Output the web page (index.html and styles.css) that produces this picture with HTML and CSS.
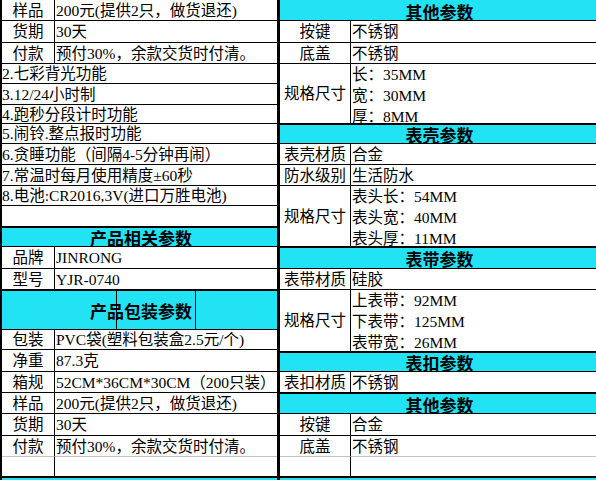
FILE: index.html
```html
<!DOCTYPE html>
<html lang="zh-CN">
<head>
<meta charset="utf-8">
<title>产品参数</title>
<link rel="stylesheet" href="styles.css">
</head>
<body>
<div class="sheet">
  <div class="left">
    <div class="k">样品</div><div class="v">200元(提供2只，做货退还)</div>
    <div class="k">货期</div><div class="v">30天</div>
    <div class="k">付款</div><div class="v">预付30%，余款交货时付清。</div>
    <div class="full">2.七彩背光功能</div>
    <div class="full">3.12/24小时制</div>
    <div class="full">4.跑秒分段计时功能</div>
    <div class="full">5.闹铃.整点报时功能</div>
    <div class="full">6.贪睡功能（间隔4-5分钟再闹）</div>
    <div class="full">7.常温时每月使用精度±60秒</div>
    <div class="full">8.电池:CR2016,3V(进口万胜电池)</div>
    <div class="full"></div>
    <div class="hd">产品相关参数</div>
    <div class="k">品牌</div><div class="v">JINRONG</div>
    <div class="k">型号</div><div class="v">YJR-0740</div>
    <div class="hd pack">产品包装参数</div>
    <div class="k">包装</div><div class="v">PVC袋(塑料包装盒2.5元/个)</div>
    <div class="k">净重</div><div class="v">87.3克</div>
    <div class="k">箱规</div><div class="v">52CM*36CM*30CM（200只装）</div>
    <div class="k">样品</div><div class="v">200元(提供2只，做货退还)</div>
    <div class="k">货期</div><div class="v">30天</div>
    <div class="k soft">付款</div><div class="v soft">预付30%，余款交货时付清。</div>
    <div class="k last"></div><div class="v last"></div>
    <div class="hd tail"></div>
  </div>
  <div class="right">
    <div class="hd first">其他参数</div>
    <div class="k">按键</div><div class="v">不锈钢</div>
    <div class="k">底盖</div><div class="v">不锈钢</div>
    <div class="k">规格尺寸</div>
    <div class="v multi"><div class="sub">长：35MM</div><div class="sub">宽：30MM</div><div class="sub">厚：8MM</div></div>
    <div class="hd">表壳参数</div>
    <div class="k">表壳材质</div><div class="v">合金</div>
    <div class="k">防水级别</div><div class="v">生活防水</div>
    <div class="k">规格尺寸</div>
    <div class="v multi"><div class="sub">表头长：54MM</div><div class="sub">表头宽：40MM</div><div class="sub">表头厚：11MM</div></div>
    <div class="hd">表带参数</div>
    <div class="k">表带材质</div><div class="v">硅胶</div>
    <div class="k">规格尺寸</div>
    <div class="v multi"><div class="sub">上表带：92MM</div><div class="sub">下表带：125MM</div><div class="sub">表带宽：26MM</div></div>
    <div class="hd">表扣参数</div>
    <div class="k">表扣材质</div><div class="v">不锈钢</div>
    <div class="hd">其他参数</div>
    <div class="k">按键</div><div class="v">合金</div>
    <div class="k soft">底盖</div><div class="v soft">不锈钢</div>
    <div class="k last"></div><div class="v last"></div>
    <div class="hd tail"></div>
  </div>
</div>
</body>
</html>
```

FILE: styles.css
```css
html, body {
  margin: 0;
  padding: 0;
  background: #ffffff;
  overflow: hidden;
}

.sheet {
  display: flex;
  width: 596px;
  height: 480px;
  overflow: hidden;
  font-family: "Liberation Serif", "Noto Sans CJK SC", serif;
  font-size: 15.5px;
  color: #000000;
}

.left {
  width: 277px;
  box-sizing: border-box;
  border-left: 2px solid #000000;
  display: grid;
  grid-template-columns: 53px 1fr;
  grid-template-rows: 21px 22px 21px 20px 21px 19px 20px 21px 21px 20px 21px 20px 22px 21px 40px 20px 22px 21px 21px 22px 21px 21px 21px;
}

.right {
  flex: 1;
  box-sizing: border-box;
  border-left: 3px solid #000000;
  display: grid;
  grid-template-columns: 71px 1fr;
  grid-template-rows: 21px 22px 21px 60px 20px 21px 21px 61px 22px 21px 62px 20px 21px 21px 22px 21px 21px 21px;
}

.k, .v, .full, .hd {
  box-sizing: border-box;
  border-bottom: 1px solid #000000;
  display: flex;
  align-items: center;
  white-space: nowrap;
  line-height: 1.2;
  padding-top: 2px;
  min-width: 0;
}

.k {
  justify-content: center;
  border-right: 1px solid #000000;
}

.v {
  padding-left: 1px;
}

.full {
  grid-column: 1 / -1;
  padding-left: 0;
}

.hd {
  grid-column: 1 / -1;
  justify-content: center;
  background: #22e3f3;
  border-top: 1px solid #000000;
  font-family: "Noto Sans CJK SC", sans-serif;
  font-weight: 700;
  font-size: 17px;
  line-height: 1.1;
  padding-top: 3px;
  padding-left: 3px;
}

.hd.first {
  border-top: 0;
  padding-top: 4px;
}

.hd.pack {
  background:
    linear-gradient(#000000, #000000) 114px 0 / 1px 100% no-repeat,
    linear-gradient(#000000, #000000) 193px 0 / 1px 100% no-repeat,
    #22e3f3;
}

.multi {
  display: block;
  padding-top: 0;
  overflow: hidden;
}

.sub {
  height: 21px;
  display: flex;
  align-items: center;
  padding-top: 2px;
  box-sizing: border-box;
}

.soft {
  border-bottom-color: #c4c4c4;
}

.last {
  border-bottom: 2px solid #000000;
}

.tail {
  border-top: 0;
}
```
